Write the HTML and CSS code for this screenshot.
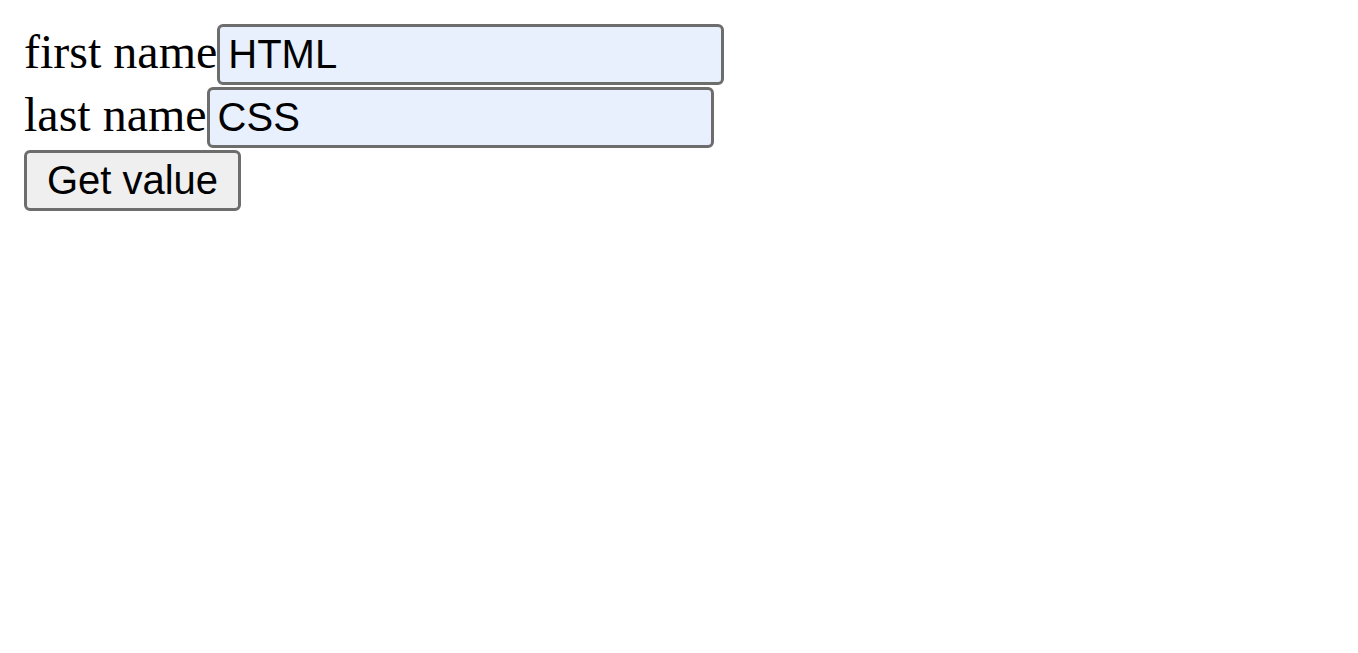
FILE: index.html
```html
<!DOCTYPE html>
<html>
<head>
<meta charset="utf-8">
<link rel="stylesheet" href="styles.css">
</head>
<body>
<form class="form">
  <div class="row"><label class="label" for="fn">first name</label><input class="field" id="fn" type="text" value="HTML"></div>
  <div class="row"><label class="label" for="ln">last name</label><input class="field" id="ln" type="text" value="CSS"></div>
  <div class="row"><button class="btn" type="button">Get value</button></div>
</form>
</body>
</html>
```
FILE: styles.css
```css
html, body { background: #fff; }
body {
  margin: 24px;
  font-family: "Liberation Serif", "Times New Roman", serif;
  font-size: 48px;
  color: #000;
}
.form {
  display: flex;
  flex-direction: column;
  gap: 2px;
  margin: 0;
}
.row {
  display: flex;
  align-items: baseline;
  height: 61px;
}
.label {
  line-height: 1;
}
.field {
  box-sizing: border-box;
  width: 507px;
  height: 61px;
  margin: 0;
  padding: 0 8px;
  border: 3px solid #6d6d6d;
  border-radius: 6px;
  background: #e8f0fe;
  font-family: "Liberation Sans", Arial, sans-serif;
  font-size: 40px;
  color: #000;
  outline: none;
}
.btn {
  box-sizing: border-box;
  width: 217px;
  height: 61px;
  margin: 0;
  padding: 0;
  border: 3px solid #6d6d6d;
  border-radius: 6px;
  background: #efefef;
  font-family: "Liberation Sans", Arial, sans-serif;
  font-size: 40px;
  color: #000;
}
```
